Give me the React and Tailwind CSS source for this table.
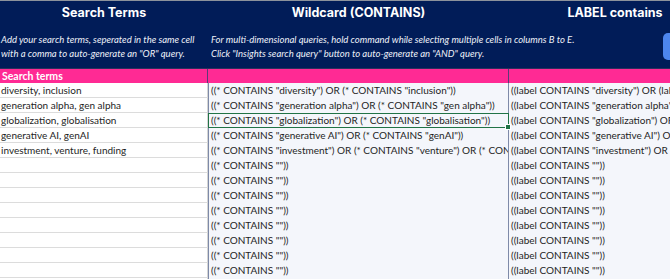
import React from "react";

const termsA = [
  "diversity, inclusion",
  "generation alpha, gen alpha",
  "globalization, globalisation",
  "generative AI, genAI",
  "investment, venture, funding",
];
const colB = [
  '((* CONTAINS "diversity") OR (* CONTAINS "inclusion"))',
  '((* CONTAINS "generation alpha") OR (* CONTAINS "gen alpha"))',
  '((* CONTAINS "globalization") OR (* CONTAINS "globalisation"))',
  '((* CONTAINS "generative AI") OR (* CONTAINS "genAI"))',
  '((* CONTAINS "investment") OR (* CONTAINS "venture") OR (* CONTAINS "funding"))',
];
const colC = [
  '((label CONTAINS "diversity") OR (label CONTAINS "inclusion"))',
  '((label CONTAINS "generation alpha") OR (label CONTAINS "gen alpha"))',
  '((label CONTAINS "globalization") OR (label CONTAINS "globalisation"))',
  '((label CONTAINS "generative AI") OR (label CONTAINS "genAI"))',
  '((label CONTAINS "investment") OR (label CONTAINS "venture") OR (label CONTAINS "funding"))',
];

const rows = Array.from({ length: 14 }, (_, i) => ({
  a: termsA[i] || "",
  b: colB[i] || '((* CONTAINS ""))',
  c: colC[i] || '((label CONTAINS ""))',
}));

const cellFont = { fontFamily: "Lato, 'Open Sans', sans-serif" };
const titleFont = { fontFamily: "Inter, sans-serif" };

export default function App() {
  return (
    <div className="w-[670px] h-[279px] overflow-hidden bg-white border-t border-[#8c929c]" style={cellFont}>
      {/* Header */}
      <div className="grid grid-cols-[208px_301px_300px] h-[67px] bg-[#011c58] text-white">
        <div className="flex flex-col">
          <div className="h-[24px] flex items-center justify-center font-bold text-[12.5px]" style={titleFont}>
            Search Terms
          </div>
          <div className="pl-[1px] pt-[8px] italic text-[9.5px] leading-[14px] whitespace-nowrap text-[#eef1f8]">
            <div>Add your search terms, seperated in the same cell</div>
            <div>with a comma to auto-generate an "OR" query.</div>
          </div>
        </div>
        <div className="flex flex-col">
          <div className="h-[24px] flex items-center justify-center font-bold text-[12.5px]" style={titleFont}>
            Wildcard (CONTAINS)
          </div>
          <div className="pl-[3px] pt-[8px] italic text-[9.5px] leading-[14px] whitespace-nowrap text-[#eef1f8]">
            <div>For multi-dimensional queries, hold command while selecting multiple cells in columns B to E.</div>
            <div>Click "Insights search query" button to auto-generate an "AND" query.</div>
          </div>
        </div>
        <div className="flex flex-col">
          <div className="h-[24px] w-[212px] flex items-center justify-center font-bold text-[12.5px] whitespace-nowrap" style={titleFont}>
            LABEL contains
          </div>
          <div className="flex pl-[154px] pt-[8px]">
            <div className="w-[60px] h-[27px] rounded-[5px] bg-[#4d86ee]" />
          </div>
        </div>
      </div>

      {/* Pink bar */}
      <div className="grid grid-cols-[208px_301px_300px] h-[15px] bg-[#ff2a94] text-white border-t border-[#2b2f5c]">
        <div className="pl-[2px] text-[10.5px] font-bold leading-[14px] border-r border-[#5b3a78]">Search terms</div>
        <div className="border-r border-[#5b3a78]" />
        <div />
      </div>

      {/* Data rows */}
      {rows.map((r, i) => (
        <div key={i} className="grid grid-cols-[208px_301px_300px] h-[15px] text-[10px] leading-[14px] text-[#1e1e1e]">
          <div className="pl-[1px] bg-white border-b border-[#dcdcdc] border-r border-r-[#d4d4d4] whitespace-nowrap overflow-hidden">
            {r.a}
          </div>
          <div className={`relative pl-[2px] bg-[#f4f6fb] border-l border-[#7e8aa8] border-r border-r-[#7e8aa8] whitespace-nowrap ${i === 2 ? "z-10 outline outline-1 outline-[#217346] -outline-offset-1" : "overflow-hidden"}`}>
            <div className="overflow-hidden">{r.b}</div>
            {i === 2 && (
              <div className="absolute right-[-3px] bottom-[-2px] w-[4px] h-[4px] bg-[#217346] border border-white box-content" />
            )}
          </div>
          <div className="pl-[2px] bg-[#f4f6fb] whitespace-nowrap overflow-hidden">
            {r.c}
          </div>
        </div>
      ))}
    </div>
  );
}
